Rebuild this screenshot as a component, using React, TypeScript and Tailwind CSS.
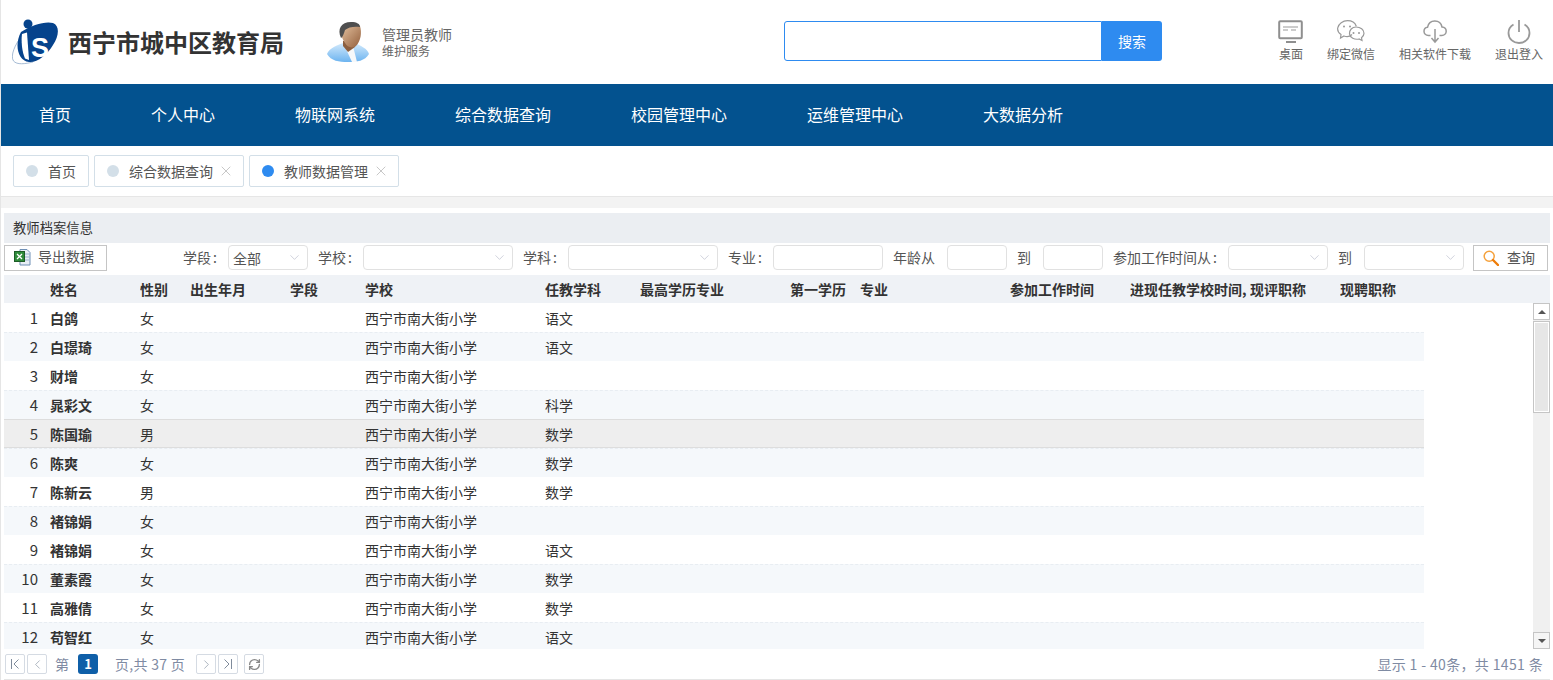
import React from "react";
import { ChevronDown, X, RefreshCw, ChevronLeft, ChevronRight } from "lucide-react";

const F = "font-['Noto_Sans_CJK_SC','Liberation_Sans',sans-serif]";

function Logo() {
  return (
    <svg width="47" height="46" viewBox="0 0 47 46" className="shrink-0">
      <path d="M10 17 C3 25 -2 37 1.500 42 C5 46 13 45 21 43" fill="none" stroke="#8fa9c9" strokeWidth="0.8" />
      <path d="M9 13 C20 6 33 2 41 4 C48 7 47 17 41 26 C35 36 25 44 17 43 C6 42 2 26 9 13Z" fill="#06438c" />
      <circle cx="16" cy="5" r="4.500" fill="#06438c" />
      <path d="M10 15 L15 13.500 L17 41 L13 39.500 C10 33 9 22 10 15Z" fill="#fff" />
      <text x="19" y="38" fontSize="27" fontWeight="700" fontFamily="Liberation Sans" fill="#fff">S</text>
    </svg>
  );
}

function Avatar() {
  return (
    <svg width="42" height="42" viewBox="0 0 42 42" className="shrink-0">
      <defs>
        <linearGradient id="b" x1="0" y1="0" x2="0" y2="1"><stop offset="0" stopColor="#d3eafc" /><stop offset="1" stopColor="#6db4f0" /></linearGradient>
        <linearGradient id="f" x1="0" y1="0" x2="1" y2="1"><stop offset="0" stopColor="#e6c4a2" /><stop offset="1" stopColor="#935f3c" /></linearGradient>
      </defs>
      <path d="M0 33 C2 27 11 24 16 22 L27 22 C33 24 41 28 42 33 C38 40 30 41 21 41 C12 41 4 40 0 33Z" fill="url(#b)" />
      <path d="M19 28 L26 25 L30 41 L25 41Z" fill="#f6f8fa" />
      <path d="M16 20 L28 20 L28 26 L21 31 L16 25Z" fill="#8c5f3f" />
      <path d="M14 9 C16 3 28 2 33 5 C35 11 34 20 29 25 C25 28 20 26 18 22 C15 18 14 14 14 9Z" fill="url(#f)" />
      <path d="M14 17 C10 8 14 1 24 1 C30 1 33 3 33 6 C28 5 21 6 18 9 C17 12 16 16 14 17Z" fill="#4f4f4f" />
    </svg>
  );
}

function Desk() {
  return (
    <svg width="26" height="24" viewBox="0 0 26 24" fill="none">
      <rect x="1.200" y="1.200" width="22.600" height="17" rx="1" stroke="#8f8f8f" strokeWidth="2" />
      <path d="M5 7h15M5 10h5M13 10h5" stroke="#9a9a9a" strokeWidth="1.200" />
      <path d="M8 22h10" stroke="#8f8f8f" strokeWidth="2" />
    </svg>
  );
}
function Wechat() {
  return (
    <svg width="28" height="24" viewBox="0 0 28 24" fill="none" stroke="#999" strokeWidth="1.200">
      <path d="M15 14.500c-1.500 1.500-5 2.500-8 1.500L3.500 18l.5-3.500C1 12.500.5 9.500.7 8 1.500 3.500 6 .7 10.500 .7c4 0 7.500 2 8.800 5.500" />
      <path d="M19 7c4.500 0 8 2.800 8 6.300 0 1.800-1 3.400-2.500 4.500l.5 2.700-3-1.500c-4.500 1-9-1.500-9.500-5.200C12.300 10 15 7 19 7Z" />
      <circle cx="7" cy="6.500" r="1" fill="#999" stroke="none" /><circle cx="13" cy="6.500" r="1" fill="#999" stroke="none" />
      <circle cx="16.500" cy="13" r="1" fill="#999" stroke="none" /><circle cx="22" cy="13" r="1" fill="#999" stroke="none" />
    </svg>
  );
}
function Cloud() {
  return (
    <svg width="24" height="24" viewBox="0 0 24 24" fill="none" stroke="#999" strokeWidth="1.500">
      <path d="M7.500 15.500H5.500C2.800 15.500 1 13.500 1 11.300c0-2 1.500-3.700 3.500-4C5.300 3.300 8.300 1 11.800 1c3.700 0 6.500 2.500 7.200 6 2.300.2 4.200 2 4.200 4.300 0 2.300-2 4.200-4.400 4.200h-2.300" />
      <path d="M12 9v13M8.500 18l3.500 4 3.500-4" />
    </svg>
  );
}
function Power() {
  return (
    <svg width="24" height="24" viewBox="0 0 24 24" fill="none" stroke="#999" strokeWidth="1.800">
      <path d="M6.500 4.500C3.500 6.300 1.500 9.500 1.500 13c0 5.800 4.700 10 10.500 10s10.500-4.200 10.500-10c0-3.500-2-6.700-5-8.500" />
      <path d="M12 0v12" />
    </svg>
  );
}
function Excel() {
  return (
    <svg width="17" height="17" viewBox="0 0 17 17">
      <path d="M6 .5h7l3 3v12.500H6Z" fill="#e8eef6" stroke="#6f8fb5" />
      <path d="M11 5h4M11 8h4M11 11h4" stroke="#9db4cf" />
      <rect x="0.500" y="2.500" width="10" height="10" fill="#2e8b3a" stroke="#1d5c27" />
      <path d="M3 5l5 5M8 5l-5 5" stroke="#fff" strokeWidth="1.300" />
    </svg>
  );
}
function Magnifier() {
  return (
    <svg width="16" height="16" viewBox="0 0 16 16" fill="none" className="shrink-0">
      <circle cx="6.200" cy="6.200" r="5" stroke="#f5a13c" strokeWidth="1.500" />
      <path d="M10 10l5 5" stroke="#ee7d0a" strokeWidth="2.400" strokeLinecap="round" />
    </svg>
  );
}
function SelectBox({ w, v }: { w: string; v?: string }) {
  return (
    <div className={`${w} h-[25px] flex items-center justify-between border border-[#e1e1e1] rounded-[4px] pl-[4px] pr-[5px] bg-white`}>
      <span className="text-[14px] text-[#555] leading-none">{v}</span>
      <ChevronDown size={15} strokeWidth={1} className="text-[#b5b8c8]" />
    </div>
  );
}
function Label({ children, cls }: { children: React.ReactNode; cls: string }) {
  return <span className={`${cls} text-[14px] text-[#555] whitespace-nowrap -mt-[1px]`}>{children}</span>;
}
function PagerBtn({ children }: { children: React.ReactNode }) {
  return (
    <div className="w-[20px] h-[20px] flex items-center justify-center border border-[#d5dbe3] rounded-[2px] text-[#7f8b9b]">{children}</div>
  );
}

const rows: [string, string, string, string][] = [
  ["1", "白鸽", "女", "语文"],
  ["2", "白璟琦", "女", "语文"],
  ["3", "财增", "女", ""],
  ["4", "晁彩文", "女", "科学"],
  ["5", "陈国瑜", "男", "数学"],
  ["6", "陈爽", "女", "数学"],
  ["7", "陈新云", "男", "数学"],
  ["8", "褚锦娟", "女", ""],
  ["9", "褚锦娟", "女", "语文"],
  ["10", "董素霞", "女", "数学"],
  ["11", "高雅倩", "女", "数学"],
  ["12", "苟智红", "女", "语文"],
];
const cols = "grid grid-cols-[46px_90px_50px_100px_75px_180px_95px_150px_70px_150px_120px_120px_90px_88px]";
const heads = ["", "姓名", "性别", "出生年月", "学段", "学校", "任教学科", "最高学历专业", "第一学历", "专业", "参加工作时间", "进现任教学校时间,", "现评职称", "现聘职称"];

export default function App() {
  return (
    <div className={`${F} w-[1553px] h-[680px] overflow-hidden bg-white flex flex-col border-l border-[#e5e5e5]`}>
      <header className="h-[84px] shrink-0 flex items-center relative">
        <div className="ml-[11px] flex items-center">
          <Logo />
          <span className="ml-[9px] text-[24px] font-bold text-[#333] leading-none whitespace-nowrap">西宁市城中区教育局</span>
        </div>
        <div className="ml-[43px] flex items-center">
          <Avatar />
          <div className="ml-[13px] flex flex-col">
            <span className="text-[14px] text-[#666] leading-[17px]">管理员教师</span>
            <span className="text-[12px] text-[#666] leading-[15px]">维护服务</span>
          </div>
        </div>
        <div className="ml-[332px] flex h-[40px] w-[378px] -mt-[2px]">
          <div className="flex-1 border border-[#2e8bf0] rounded-l-[3px] bg-white" />
          <div className="w-[60px] bg-[#2e8bf0] rounded-r-[3px] text-white text-[14px] flex items-center justify-center">搜索</div>
        </div>
        <div className="ml-auto flex items-start -mt-[2px] pr-[10px] gap-[24px]">
          {[
            ["桌面", <Desk />, "w-[24px]"],
            ["绑定微信", <Wechat />, "w-[48px]"],
            ["相关软件下载", <Cloud />, "w-[72px]"],
            ["退出登入", <Power />, "w-[48px]"],
          ].map(([t, ic, w], i) => (
            <div key={i} className={`flex flex-col items-center ${w}`}>
              <div className="h-[24px] flex items-center justify-center">{ic}</div>
              <span className="text-[12px] text-[#666] leading-[16px] mt-[2px] whitespace-nowrap">{t}</span>
            </div>
          ))}
        </div>
      </header>

      <nav className="h-[62px] shrink-0 bg-[#03528f] flex items-center pl-[38px] pb-[2px] gap-[80px] text-white text-[16px]">
        {["首页", "个人中心", "物联网系统", "综合数据查询", "校园管理中心", "运维管理中心", "大数据分析"].map((t) => (
          <span key={t} className="whitespace-nowrap">{t}</span>
        ))}
      </nav>

      <div className="h-[50px] shrink-0 flex items-start pl-[12px] gap-[5px] pt-[9px]">
        {[
          ["首页", "bg-[#d3dfe8]", false, "w-[76px]"],
          ["综合数据查询", "bg-[#d3dfe8]", true, "w-[150px]"],
          ["教师数据管理", "bg-[#2e8bf0]", true, "w-[150px]"],
        ].map(([t, c, x, w], i) => (
          <div key={i} className={`${w} h-[32px] flex items-center border border-[#d3dfe8] rounded-[2px] pl-[12px] text-[14px] text-[#555]`}>
            <span className={`${c} w-[12px] h-[12px] rounded-full mr-[10px]`} />
            <span className="whitespace-nowrap">{t}</span>
            {x ? <X size={16} strokeWidth={1} className="ml-[5px] text-[#aaa]" /> : null}
          </div>
        ))}
      </div>

      <div className="h-[12px] shrink-0 bg-[#f3f3f3] border-t border-[#e6e6e6]" />

      <main className="pl-[3px] pr-[3px] pt-[5px] flex-1 flex flex-col min-h-0">
        <div className="h-[30px] shrink-0 bg-[#ebeef2] flex items-center pl-[9px] text-[13.33px] text-[#333]">教师档案信息</div>
        <div className="h-[32px] shrink-0 flex items-center pb-[3px]">
          <div className="w-[103px] h-[26px] flex items-center border border-[#c5c5c5] pl-[9px] text-[14px] text-[#555]">
            <Excel />
            <span className="ml-[7px] whitespace-nowrap -mt-[2px]">导出数据</span>
          </div>
          <Label cls="ml-[76px] w-[34px]">学段<span className="ml-[2px]">:</span></Label>
          <div className="ml-[11px]"><SelectBox w="w-[80px]" v="全部" /></div>
          <Label cls="ml-[10px] w-[34px]">学校<span className="ml-[2px]">:</span></Label>
          <div className="ml-[11px]"><SelectBox w="w-[150px]" /></div>
          <Label cls="ml-[10px] w-[34px]">学科<span className="ml-[2px]">:</span></Label>
          <div className="ml-[11px]"><SelectBox w="w-[150px]" /></div>
          <Label cls="ml-[10px] w-[34px]">专业<span className="ml-[2px]">:</span></Label>
          <div className="ml-[11px] w-[110px] h-[25px] border border-[#e1e1e1] rounded-[4px]" />
          <Label cls="ml-[10px] w-[42px]">年龄从</Label>
          <div className="ml-[12px] w-[60px] h-[25px] border border-[#e1e1e1] rounded-[4px]" />
          <Label cls="ml-[10px] w-[14px]">到</Label>
          <div className="ml-[12px] w-[60px] h-[25px] border border-[#e1e1e1] rounded-[4px]" />
          <Label cls="ml-[10px] w-[105px]">参加工作时间从<span className="ml-[2px]">:</span></Label>
          <div className="ml-[10px]"><SelectBox w="w-[100px]" /></div>
          <Label cls="ml-[10px] w-[14px]">到</Label>
          <div className="ml-[12px]"><SelectBox w="w-[100px]" /></div>
          <div className="ml-[9px] w-[75px] h-[26px] flex items-center border border-[#c5c5c5] pl-[9px] text-[14px] text-[#555]">
            <Magnifier />
            <span className="ml-[8px] whitespace-nowrap">查询</span>
          </div>
        </div>
        <div className={`h-[28px] shrink-0 bg-[#eff2f6] ${cols} items-center text-[14px] font-bold text-[#333]`}>
          {heads.map((h, i) => (
            <span key={i} className="whitespace-nowrap overflow-hidden">{h}</span>
          ))}
        </div>
        <div className="flex-1 min-h-0 flex">
          <div className="flex-1 min-w-0 overflow-hidden">
            {rows.map((r, i) => {
              const sel = i === 4;
              const bg = sel
                ? "bg-[#eeeeee] border-y border-[#dddddd] pt-[1px]"
                : i % 2 === 1
                  ? "bg-[#f5f8fb] border-t border-dashed border-[#e8edf2]"
                  : "bg-white border-t border-transparent";
              return (
                <div key={i} className={`${cols} ${bg} w-[1420px] h-[29px] items-center text-[14px] text-[#333] box-border`}>
                  <span className="text-[15px] text-right pr-[12px]">{r[0]}</span>
                  <span className="font-bold">{r[1]}</span>
                  <span>{r[2]}</span>
                  <span />
                  <span />
                  <span>西宁市南大街小学</span>
                  <span>{r[3]}</span>
                </div>
              );
            })}
          </div>
          <div className="w-[17px] shrink-0 bg-[#f0f0f0] flex flex-col">
            <div className="h-[17px] border border-[#c5c5c5] bg-white flex items-center justify-center">
              <span className="w-0 h-0 border-x-[4px] border-x-transparent border-b-[4px] border-b-[#555]" />
            </div>
            <div className="h-[92px] border-2 border-[#fff] outline outline-1 outline-[#c5c5c5] -outline-offset-1 bg-[#e6e6e6] mt-[1px]" />
            <div className="flex-1" />
            <div className="h-[17px] border border-[#c5c5c5] bg-[#f5f5f5] flex items-center justify-center">
              <span className="w-0 h-0 border-x-[4px] border-x-transparent border-t-[4px] border-t-[#555]" />
            </div>
          </div>
        </div>
        <div className="h-[31px] shrink-0 flex items-center text-[14px] text-[#7f8ba3] border-b border-[#e5e5e5]">
          <div className="flex items-center gap-[1px] ml-[1px]">
            <PagerBtn><svg width="12" height="12" viewBox="0 0 12 12" fill="none" stroke="currentColor"><path d="M2.500 1v10M9.500 1.500L5 6l4.500 4.500" /></svg></PagerBtn>
            <div className="ml-[1px]"><PagerBtn><ChevronLeft size={15} strokeWidth={1} /></PagerBtn></div>
          </div>
          <span className="ml-[8px]">第</span>
          <span className="ml-[9px] w-[20px] h-[20px] rounded-[3px] bg-[#0f5fa8] text-white text-[13px] font-bold flex items-center justify-center">1</span>
          <span className="ml-[17px] whitespace-nowrap tracking-[0.3px]">页,共 37 页</span>
          <div className="ml-[11px] flex items-center gap-[2px]">
            <PagerBtn><ChevronRight size={15} strokeWidth={1} /></PagerBtn>
            <PagerBtn><svg width="12" height="12" viewBox="0 0 12 12" fill="none" stroke="currentColor"><path d="M9.500 1v10M2.500 1.500L7 6l-4.500 4.500" /></svg></PagerBtn>
          </div>
          <div className="ml-[6px]"><PagerBtn><RefreshCw size={13} strokeWidth={2.500} className="text-[#888]" /></PagerBtn></div>
          <span className="ml-auto mr-[7px] whitespace-nowrap tracking-[0.35px]">显示 1 - 40条，共 1451 条</span>
        </div>
      </main>
    </div>
  );
}
